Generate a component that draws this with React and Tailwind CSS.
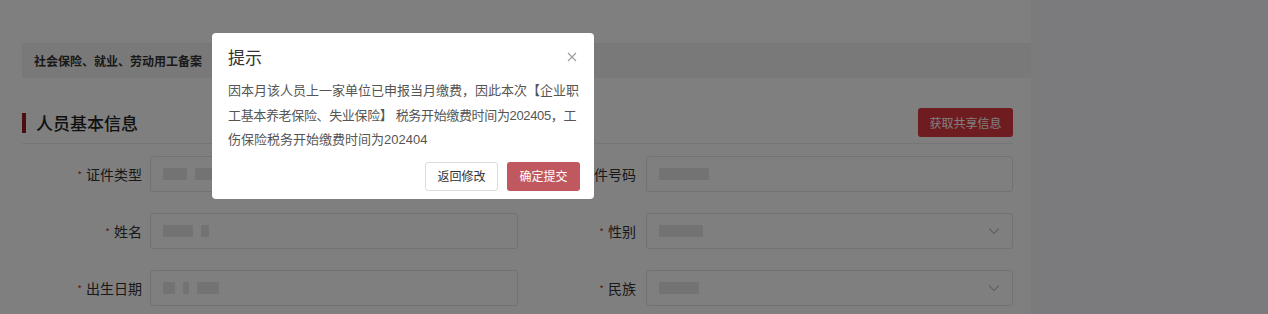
import React from 'react';

const font = { fontFamily: '"Noto Sans CJK SC", "Noto Sans", sans-serif' };

function Field({ label, select, fill, labelClass = 'pr-2' }) {
  return (
    <div className="flex items-center h-[36px]">
      <div className={`w-[128px] shrink-0 flex justify-end items-center text-[14px] text-[#333] ${labelClass}`}>
        <span className="text-[#c0392b] text-[10px] mr-1">*</span>
        {label}
      </div>
      <div className="flex-1 h-[36px] border border-[#e4e4e4] rounded-[3px] bg-white flex items-center px-3 gap-2">
        {fill.map((w, i) => (
          <span key={i} className="h-[12px] bg-[#e6e6e6] rounded-[1px]" style={{ width: w }} />
        ))}
        <span className="flex-1" />
        {select && (
          <svg width="12" height="8" viewBox="0 0 12 8" fill="none" stroke="#c4c4c4" strokeWidth="1.2">
            <path d="M1 1.5 6 6.5 11 1.5" />
          </svg>
        )}
      </div>
    </div>
  );
}

export default function App() {
  return (
    <div className="relative w-[1268px] h-[314px] overflow-hidden bg-[#f6f6fb]" style={font}>
      {/* page */}
      <div className="w-[1031px] h-full bg-white pt-[43px] pl-[22px]">
        <div className="h-[35px] bg-[#f2f2f2] flex items-center pl-3 text-[12px] font-bold text-[#333]">
          社会保险、就业、劳动用工备案
        </div>
        <div className="pr-[18px]">
          <div className="flex items-center justify-between pt-[30px] pb-[6px] border-b border-[#ececec]">
            <div className="flex items-center">
              <span className="w-[4px] h-[20px] bg-[#9b1c22] mr-[10px]" />
              <span className="text-[17px] font-medium text-[#222]">人员基本信息</span>
            </div>
            <button className="w-[95px] h-[29px] rounded-[3px] bg-[#dc3840] text-white text-[12px]">
              获取共享信息
            </button>
          </div>
          <div className="grid grid-cols-[496px_1fr] gap-y-[21px] pt-[12px]">
            <Field label="证件类型" fill={['24px', '40px']} />
            <Field label="证件号码" fill={['50px']} labelClass="pr-[10px]" />
            <Field label="姓名" fill={['30px', '8px']} />
            <Field label="性别" fill={['44px']} select labelClass="pr-[10px]" />
            <Field label="出生日期" fill={['12px', '6px', '22px']} />
            <Field label="民族" fill={['40px']} select labelClass="pr-[10px]" />
          </div>
        </div>
      </div>

      {/* mask */}
      <div className="absolute inset-0 bg-black/50" />

      {/* dialog */}
      <div className="absolute left-[212px] top-[33px] w-[382px] h-[166px] bg-white rounded-[4px] pl-[16px] pr-[14px]">
        <div className="flex items-center justify-between h-[46px] pt-[1px]">
          <span className="text-[17px] text-[#333]">提示</span>
          <svg width="10" height="10" viewBox="0 0 10 10" stroke="#a0a0a0" strokeWidth="1.2" className="mr-[3px]">
            <path d="M1 1 9 9M9 1 1 9" />
          </svg>
        </div>
        <div
          className="text-[13px] leading-[24.5px] text-[#555] whitespace-nowrap"
          style={{ fontFamily: '"Liberation Sans", "Noto Sans CJK SC", sans-serif' }}
        >
          <div>因本月该人员上一家单位已申报当月缴费，因此本次【企业职</div>
          <div className="tracking-[-0.35px]">工基本养老保险、失业保险】 税务开始缴费时间为202405，工</div>
          <div>伤保险税务开始缴费时间为202404</div>
        </div>
        <div className="flex justify-end gap-[9px] mt-[9px]">
          <button className="w-[73px] h-[29px] rounded-[3px] border border-[#dcdcdc] bg-white text-[12px] text-[#333]">
            返回修改
          </button>
          <button className="w-[73px] h-[29px] rounded-[3px] bg-[#c0585f] text-[12px] text-white">
            确定提交
          </button>
        </div>
      </div>
    </div>
  );
}
